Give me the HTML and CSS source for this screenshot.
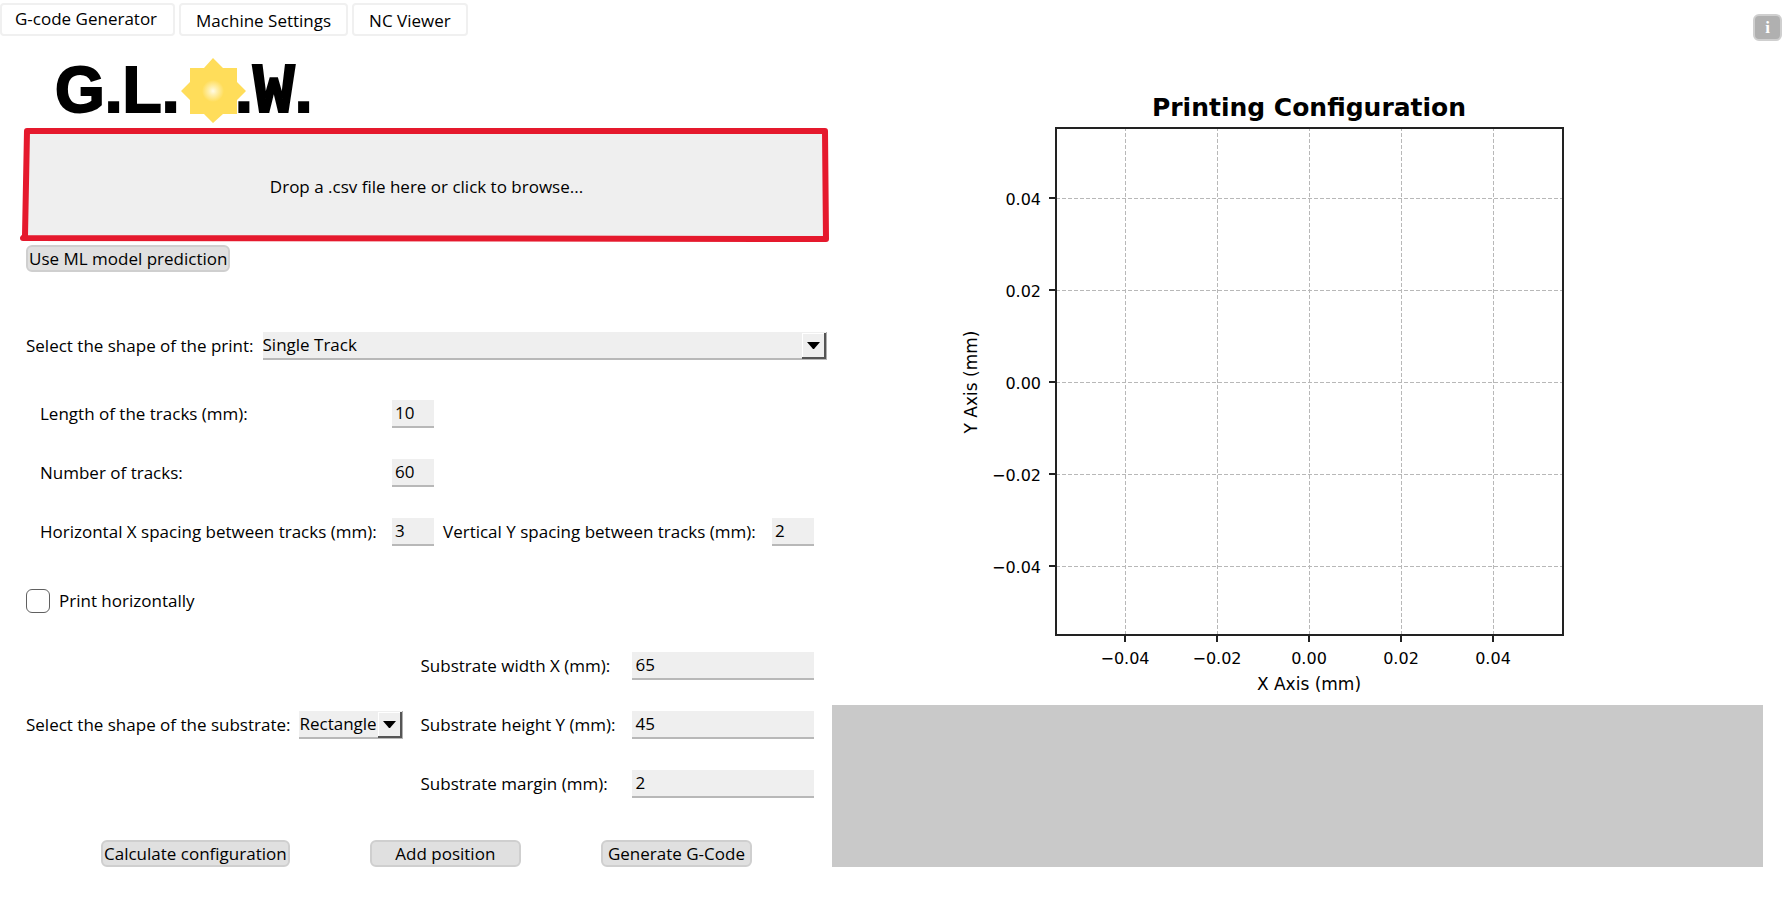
FILE: index.html
```html
<!DOCTYPE html>
<html lang="en">
<head>
<meta charset="utf-8">
<title>G.L.O.W. G-code Generator</title>
<link rel="stylesheet" href="styles.css">
</head>
<body>
<header class="topbar">
  <nav class="tabs">
    <button type="button" class="tab tab-active">G-code Generator</button>
    <button type="button" class="tab">Machine Settings</button>
    <button type="button" class="tab">NC Viewer</button>
  </nav>
  <button type="button" class="info">i</button>
</header>
<main class="layout">
  <form class="panel">
    <svg class="logo" viewBox="0 0 270 76" role="img" aria-label="G.L.O.W.">
      <defs>
        <radialGradient id="glow">
          <stop offset="0" stop-color="#fffbe6"/>
          <stop offset="0.35" stop-color="#fff0b0"/>
          <stop offset="1" stop-color="#ffdd5a"/>
        </radialGradient>
      </defs>
      <text class="logo-text" x="5" y="62">G.L.</text>
      <text class="logo-text" x="185" y="62">.<tspan class="logo-w">W</tspan>.</text>
      <path fill="#ffdd5a" d="M163 8l10 10h14v14l9 9-9 9v14h-14l-10 9-9-9h-14V50l-9-9 9-9V18h14z"/>
      <circle cx="163" cy="41" r="11" fill="url(#glow)"/>
    </svg>

    <button type="button" class="drop">
      Drop a .csv file here or click to browse...
      <svg class="drop-outline" viewBox="0 0 800 108" preserveAspectRatio="none" aria-hidden="true">
        <path d="M1 0L798 0L799 108L-3 107L-1 105Z"/>
      </svg>
    </button>
    <button type="button" class="btn btn-ml">Use ML model prediction</button>

    <div class="row row-shape">
      <label for="shape">Select the shape of the print:</label>
      <span class="select select-wide">
        <select id="shape"><option>Single Track</option></select>
        <svg class="arrow" viewBox="0 0 24 26" aria-hidden="true"><path fill="#efefef" d="M0 0h24v26H0z"/><path fill="#fff" d="M0 0h22v1H1v23H0z"/><path fill="#555" d="M22 0h2v26H0v-2h22z"/><path d="M5 9h13l-6 7h-1z"/></svg>
      </span>
    </div>

    <div class="tracks">
      <label for="len">Length of the tracks (mm):</label>
      <input id="len" class="field" type="text" value="10">
      <label for="num" class="first">Number of tracks:</label>
      <input id="num" class="field" type="text" value="60">
      <label for="sx" class="first">Horizontal X spacing between tracks (mm):</label>
      <input id="sx" class="field" type="text" value="3">
      <label for="sy" class="second">Vertical Y spacing between tracks (mm):</label>
      <input id="sy" class="field" type="text" value="2">
    </div>

    <div class="row row-check">
      <input id="hor" class="check" type="checkbox">
      <label for="hor">Print horizontally</label>
    </div>

    <div class="row row-substrate">
      <label for="sub">Select the shape of the substrate:</label>
      <span class="select">
        <select id="sub"><option>Rectangle</option></select>
        <svg class="arrow" viewBox="0 0 24 26" aria-hidden="true"><path fill="#efefef" d="M0 0h24v26H0z"/><path fill="#fff" d="M0 0h22v1H1v23H0z"/><path fill="#555" d="M22 0h2v26H0v-2h22z"/><path d="M5 9h13l-6 7h-1z"/></svg>
      </span>
      <div class="dims">
        <label for="sw">Substrate width X (mm):</label>
        <input id="sw" class="field" type="text" value="65">
        <label for="sh">Substrate height Y (mm):</label>
        <input id="sh" class="field" type="text" value="45">
        <label for="sm">Substrate margin (mm):</label>
        <input id="sm" class="field" type="text" value="2">
      </div>
    </div>

    <div class="actions">
      <button type="button" class="btn">Calculate configuration</button>
      <button type="button" class="btn">Add position</button>
      <button type="button" class="btn">Generate G-Code</button>
    </div>
  </form>

  <section class="preview">
    <svg class="chart" viewBox="0 0 931 655" role="img" aria-label="Printing Configuration">
      <text class="chart-title" x="477" y="66">Printing Configuration</text>
      <g class="grid">
        <path d="M293.5 585V78M385.5 585V78M477.5 585V78M569.5 585V78M661.5 585V78"/>
        <path d="M224 148.5H731M224 240.5H731M224 332.5H731M224 424.5H731M224 516.5H731"/>
      </g>
      <path class="axis" d="M224 78H731V585H224Z"/>
      <path class="axis" d="M293 585v7M385 585v7M477 585v7M569 585v7M661 585v7M224 148h-7M224 240h-7M224 332h-7M224 424h-7M224 516h-7"/>
      <g class="ticks-x">
        <text x="293" y="614">−0.04</text>
        <text x="385" y="614">−0.02</text>
        <text x="477" y="614">0.00</text>
        <text x="569" y="614">0.02</text>
        <text x="661" y="614">0.04</text>
        <text class="axis-name" x="477" y="640">X Axis (mm)</text>
        <text class="axis-name" transform="translate(145 332) rotate(-90)">Y Axis (mm)</text>
      </g>
      <g class="ticks-y">
        <text x="209" y="155">0.04</text>
        <text x="209" y="247">0.02</text>
        <text x="209" y="339">0.00</text>
        <text x="209" y="431">−0.02</text>
        <text x="209" y="523">−0.04</text>
      </g>
    </svg>
    <div class="log"></div>
  </section>
</main>
</body>
</html>
```
FILE: styles.css
```css
* { box-sizing: border-box; }
body {
  margin: 0;
  background: #fff;
  color: #000;
  font: 17px/24px "Open Sans", "Noto Sans", sans-serif;
}
button, input, select { font: inherit; color: inherit; margin: 0; }

.topbar {
  display: flex;
  justify-content: space-between;
  align-items: flex-start;
  height: 44px;
  padding: 3px 9px 0 0;
}
.tabs { display: flex; gap: 4px; }
.tab {
  height: 33px;
  padding: 2px 15px 0;
  border: 2px solid #f0f0f0;
  border-radius: 4px;
  background: #fff;
}
.tab-active { padding: 0 16px 2px 13px; }
.info {
  width: 29px;
  height: 27px;
  margin-top: 11px;
  padding: 0;
  border: 2px solid #cfcfcf;
  border-radius: 6px;
  background: #b0b0b0;
  color: #fff;
  font: bold 17px/20px "Liberation Serif", serif;
}

.layout {
  display: grid;
  grid-template-columns: 801fr 931fr;
  gap: 5px;
  padding: 6px 28px 30px 26px;
}
.panel { display: flex; flex-direction: column; align-items: stretch; min-width: 0; }

.logo { width: 270px; height: 76px; margin: 0 0 5px 24px; overflow: visible; }
.logo-text {
  font: bold 64px "Liberation Sans", sans-serif;
  stroke: #000;
  stroke-width: 2px;
}
.logo-w { font-family: "Liberation Mono", monospace; font-size: 70px; }

.drop {
  position: relative;
  height: 108px;
  padding: 3px 0 0;
  border: 0;
  background: #efefef;
}
.drop-outline {
  position: absolute;
  inset: 0;
  width: 100%;
  height: 100%;
  overflow: visible;
}
.drop-outline path {
  fill: none;
  stroke: #e5192d;
  stroke-width: 6px;
  stroke-linejoin: round;
}

.btn {
  min-width: 151px;
  height: 27px;
  padding: 0 1px;
  border: 2px solid #cfcfcf;
  border-radius: 6px;
  background: #e0e0e0;
  line-height: 23px;
}
.btn-ml { align-self: flex-start; margin-top: 6px; }

.row { display: flex; align-items: center; }
.row-shape { margin-top: 60px; gap: 9px; }

.select { position: relative; display: block; width: 104px; }
.select-wide { flex: 1; width: auto; }
.select select {
  appearance: none;
  display: block;
  width: 100%;
  height: 28px;
  padding: 0 26px 0 0;
  border: 0;
  border-right: 1px solid #b0b0b0;
  border-bottom: 2px solid #b8b8b8;
  border-radius: 0;
  background: #efefef;
}
.arrow {
  position: absolute;
  top: 1px;
  right: 1px;
  width: 24px;
  height: 26px;
  pointer-events: none;
}

.field {
  width: 100%;
  height: 28px;
  padding: 0 3px 1px;
  border: 0;
  border-bottom: 2px solid #b8b8b8;
  border-radius: 0;
  background: #efefef;
}

.tracks {
  display: grid;
  grid-template-columns: 352fr 42px 338fr 42px;
  row-gap: 31px;
  align-items: center;
  margin: 40px 13px 0 14px;
}
.first { grid-column: 1; }
.second { padding-left: 9px; }

.row-check { gap: 9px; margin-top: 43px; }
.check {
  appearance: none;
  width: 24px;
  height: 24px;
  border: 1px solid #606060;
  border-radius: 6px;
  background: #fff;
}

.row-substrate { gap: 9px; margin-top: 39px; }
.dims {
  flex: 1;
  display: grid;
  grid-template-columns: 212px 1fr;
  row-gap: 31px;
  align-items: center;
  margin: 0 13px 0 8px;
}

.actions {
  display: flex;
  justify-content: space-between;
  margin-top: 42px;
  padding: 0 75px;
}

.preview { display: flex; flex-direction: column; min-width: 0; }
.chart { display: block; width: 100%; height: auto; }
.chart text { font-family: "DejaVu Sans", sans-serif; font-size: 16px; }
.chart .chart-title { font-size: 25px; font-weight: bold; text-anchor: middle; }
.chart .axis-name { font-size: 17px; }
.ticks-x { text-anchor: middle; }
.ticks-y { text-anchor: end; }
.grid path { fill: none; stroke: #b8b8b8; stroke-width: 1px; stroke-dasharray: 4 2; }
.axis { fill: none; stroke: #222; stroke-width: 2px; }
.log { flex: 1; min-height: 162px; background: #c9c9c9; }
```
